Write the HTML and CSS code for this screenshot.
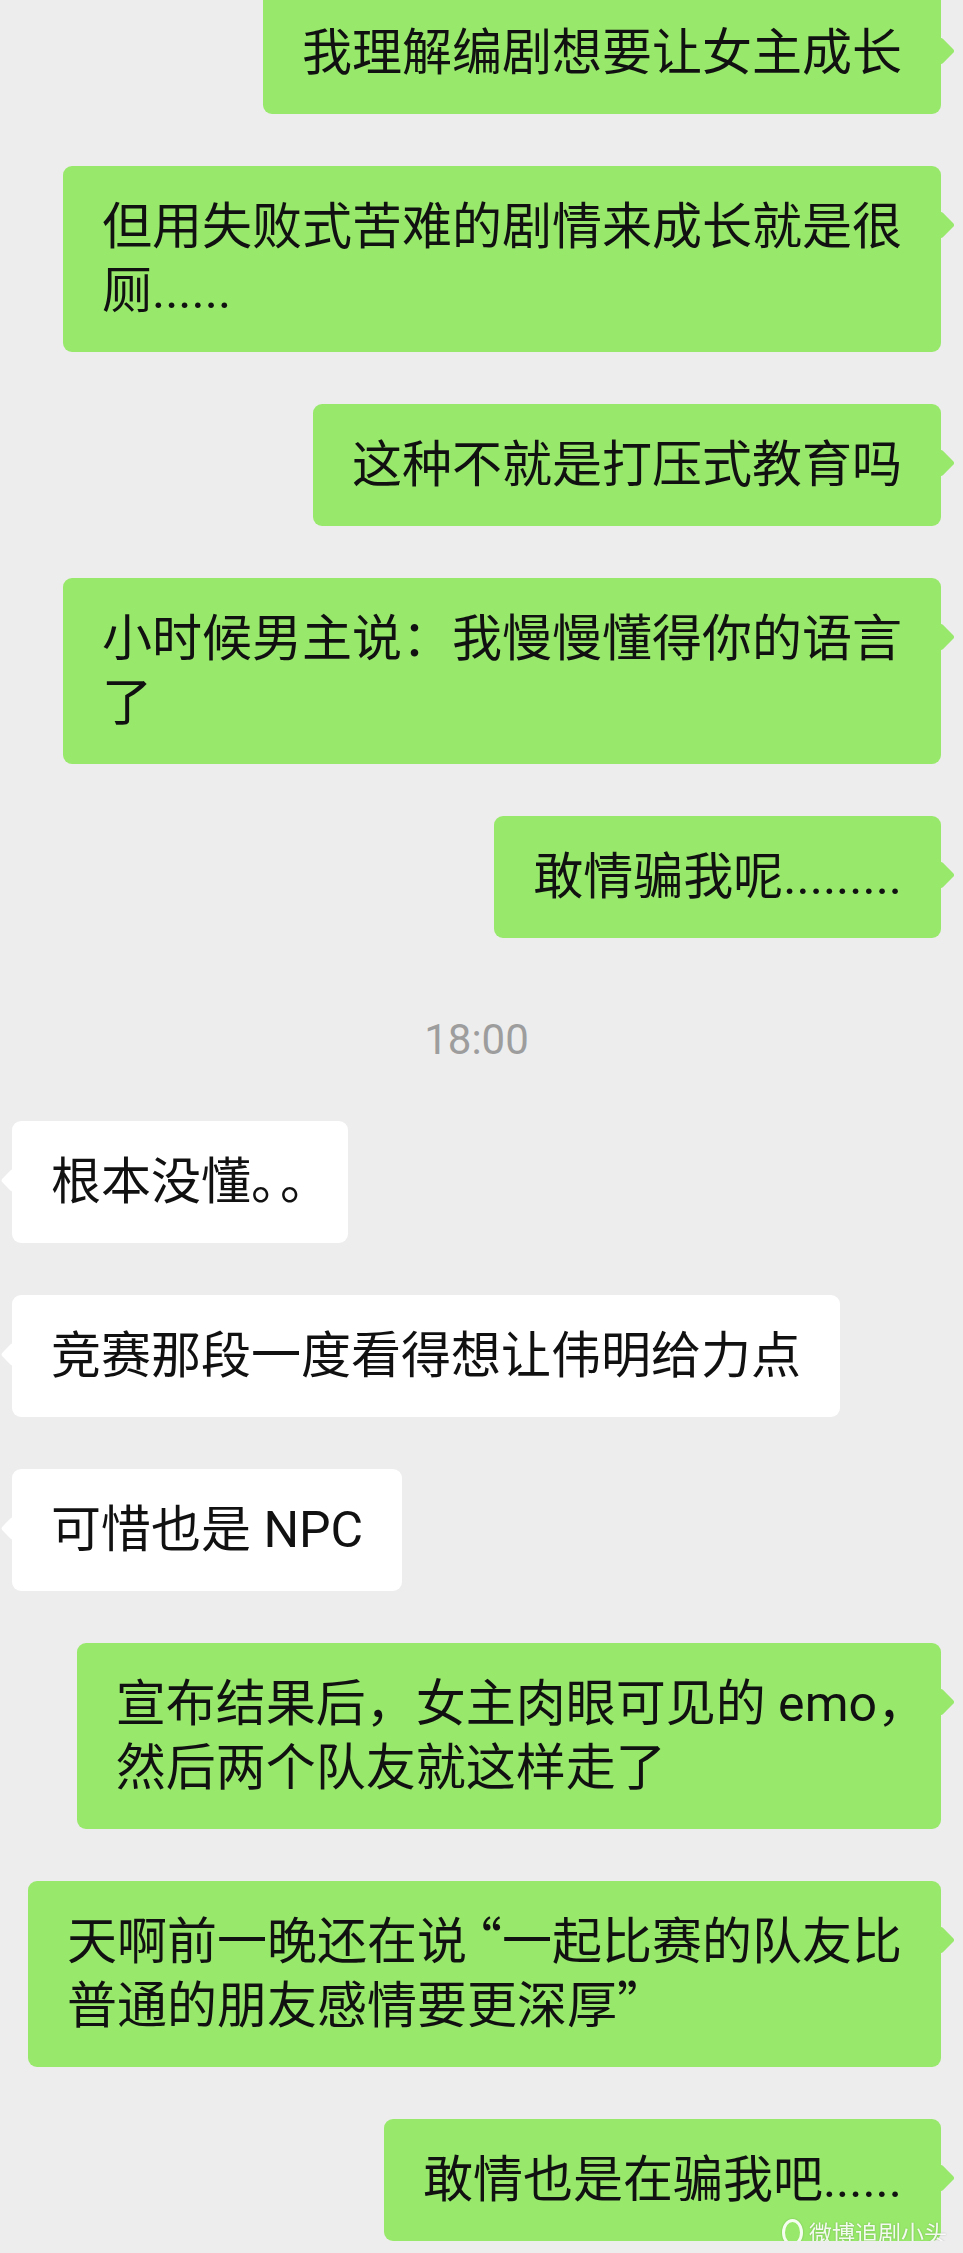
FILE: index.html
```html
<!DOCTYPE html>
<html>
<head>
  <meta charset="utf-8">
  <title>聊天记录</title>
  <link rel="stylesheet" href="styles.css">
</head>
<body>
  <div class="chat">
    <div class="row me"><div class="bubble">我理解编剧想要让女主成长</div></div>
    <div class="row me"><div class="bubble">但用失败式苦难的剧情来成长就是很<br>厕......</div></div>
    <div class="row me"><div class="bubble">这种不就是打压式教育吗</div></div>
    <div class="row me"><div class="bubble">小时候男主说：我慢慢懂得你的语言<br>了</div></div>
    <div class="row me"><div class="bubble">敢情骗我呢.........</div></div>

    <div class="time">18:00</div>

    <div class="row other"><div class="bubble">根本没懂<span class="punct dots">。。</span></div></div>
    <div class="row other"><div class="bubble">竞赛那段一度看得想让伟明给力点</div></div>
    <div class="row other"><div class="bubble">可惜也是 NPC</div></div>

    <div class="row me"><div class="bubble">宣布结果后，女主肉眼可见的 emo<span class="punct">，</span><br>然后两个队友就这样走了</div></div>
    <div class="row me"><div class="bubble">天啊前一晚还在说<span class="punct open">“</span>一起比赛的队友比<br>普通的朋友感情要更深厚<span class="punct">”</span></div></div>
    <div class="row me last">
      <div class="bubble">敢情也是在骗我吧......</div>
      <div class="watermark"><span class="wm-ring"></span><span class="wm-text">微博追剧小头</span></div>
    </div>
  </div>
</body>
</html>
```

FILE: styles.css
```css
/* page */
body {
  margin: 0;
  background: #ededed;
  font-family: Roboto, "Noto Sans CJK SC", sans-serif;
}

/* message list */
.chat {
  display: flex;
  flex-direction: column;
  gap: 52px;
  margin-top: -8px;
  padding: 0 22px 0 12px;
}
.row {
  display: flex;
}
.row.me {
  justify-content: flex-end;
}
.row.last {
  position: relative;
}

/* bubbles */
.bubble {
  position: relative;
  padding: 29px 39px;
  font-size: 50px;
  line-height: 64px;
  color: #111;
  border-radius: 9px;
  white-space: nowrap;
}
.me .bubble {
  background: #98e96b;
}
.other .bubble {
  background: #fff;
}
.bubble::after {
  content: "";
  position: absolute;
  top: 49px;
  width: 20px;
  height: 20px;
  background: inherit;
  border-radius: 3px;
  transform: rotate(45deg);
}
.me .bubble::after {
  right: -10px;
}
.other .bubble::after {
  left: -8px;
  top: 51px;
  width: 17px;
  height: 17px;
}

/* half-width punctuation inside CJK runs */
.punct {
  font-family: "Noto Sans CJK SC", sans-serif;
  font-feature-settings: "halt";
  line-height: 1;
}
.punct.dots {
  letter-spacing: 4px;
}
.punct.open {
  margin-left: 10px;
}

/* time stamp */
.time {
  margin: 25px 0 4px;
  font-size: 42px;
  line-height: 50px;
  color: #9d9d9d;
  text-align: center;
}

/* watermark */
.watermark {
  position: absolute;
  right: -6px;
  bottom: -5px;
  width: 176px;
  display: flex;
  align-items: center;
  justify-content: flex-end;
  gap: 6px;
  font-family: "Noto Sans CJK SC", sans-serif;
  font-size: 23px;
  line-height: 28px;
  color: rgba(255, 255, 255, 0.9);
  text-shadow: 0 0 2px rgba(0, 0, 0, 0.25);
  filter: blur(0.6px);
}
.wm-text {
  white-space: nowrap;
}
.wm-ring {
  flex: none;
  width: 15px;
  height: 21px;
  border: 3px solid rgba(255, 255, 255, 0.9);
  border-radius: 50%;
  box-shadow: 0 0 2px rgba(0, 0, 0, 0.25);
}
```
